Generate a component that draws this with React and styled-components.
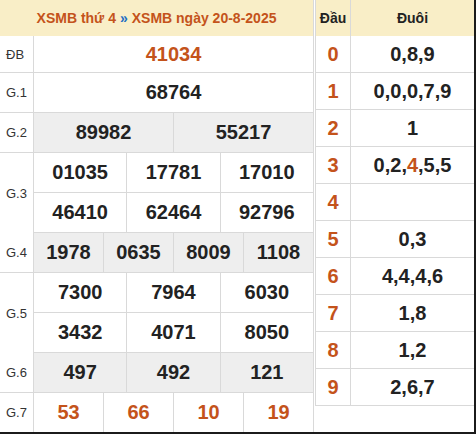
import React from 'react'
import styled, { createGlobalStyle } from 'styled-components'

const ORANGE = '#c4531b'
const CREAM = '#f9eec7'
const LINE = '#d9d9d9'
const GREY_ROW = '#eeeeee'
const INK = '#222'

const GlobalStyle = createGlobalStyle`
  html, body {
    margin: 0;
    padding: 0;
    background: #fff;
  }
  body {
    font-family: "Liberation Sans", Arial, sans-serif;
  }
`

const Frame = styled.div`
  display: flex;
  align-items: flex-start;
  width: 476px;
  height: 434px;
  box-sizing: border-box;
  border-right: 2px solid #1b1b1b;
  border-bottom: 2px solid #1b1b1b;
  overflow: hidden;
`

const ResultTable = styled.div`
  width: 314px;
  height: 100%;
  display: flex;
  flex-direction: column;
  flex-shrink: 0;
`

const TitleBar = styled.div`
  height: 36px;
  display: flex;
  align-items: center;
  justify-content: center;
  background: ${CREAM};
  border-right: 1px solid ${LINE};
  font-size: 14px;
  font-weight: bold;
  color: ${ORANGE};
  padding-bottom: 1px;
  box-sizing: border-box;
`

const Arrow = styled.span`
  color: #1f6fc4;
  margin: 0 4px;
`

const PrizeRow = styled.div`
  display: flex;
  height: ${p => p.$h || 40}px;
  box-sizing: border-box;
  border-bottom: 1px solid ${LINE};
  border-top: ${p => (p.$first ? `1px solid ${LINE}` : 'none')};
  background: ${p => (p.$shaded ? GREY_ROW : '#fff')};
  flex-shrink: 0;
`

const PrizeBlock = styled.div`
  display: flex;
  flex-shrink: 0;
`

const Label = styled.div`
  width: 34px;
  box-sizing: border-box;
  border-right: 1px solid ${LINE};
  display: flex;
  align-items: center;
  padding-left: 6px;
  font-size: 13px;
  color: #333;
  background: ${p => (p.$shaded ? GREY_ROW : '#fff')};
`

const Lines = styled.div`
  flex: 1;
  display: flex;
  flex-direction: column;
`

const NumberCell = styled.div`
  flex: 1;
  display: flex;
  align-items: center;
  justify-content: center;
  border-right: 1px solid ${LINE};
  font-size: 20px;
  font-weight: bold;
  color: ${p => (p.$hot ? ORANGE : INK)};
`

const LastRow = styled.div`
  flex: 1;
  display: flex;
  min-height: 0;
`

const HeadTable = styled.div`
  width: 160px;
  margin-left: 1px;
  border-left: 1px solid ${LINE};
  display: flex;
  flex-direction: column;
`

const HeadRow = styled.div`
  display: flex;
  height: ${p => (p.$title ? 36 : 37)}px;
  box-sizing: border-box;
  border-bottom: ${p => (p.$title ? 'none' : `1px solid ${LINE}`)};
  background: ${p => (p.$title ? CREAM : '#fff')};
`

const HeadCell = styled.div`
  width: 35px;
  box-sizing: border-box;
  border-right: 1px solid ${LINE};
  display: flex;
  align-items: center;
  justify-content: center;
  font-weight: bold;
  font-size: ${p => (p.$title ? 14 : 20)}px;
  color: ${p => (p.$title ? INK : ORANGE)};
`

const TailCell = styled.div`
  flex: 1;
  display: flex;
  align-items: center;
  justify-content: center;
  font-weight: bold;
  font-size: ${p => (p.$title ? 14 : 20)}px;
  color: ${INK};
`

const Hl = styled.span`
  color: ${ORANGE};
`

const prizes = [
  { label: 'ĐB', lines: [['41034']], hot: true, h: 37 },
  { label: 'G.1', lines: [['68764']] },
  { label: 'G.2', lines: [['89982', '55217']], shaded: true },
  { label: 'G.3', lines: [['01035', '17781', '17010'], ['46410', '62464', '92796']] },
  { label: 'G.4', lines: [['1978', '0635', '8009', '1108']], shaded: true },
  { label: 'G.5', lines: [['7300', '7964', '6030'], ['3432', '4071', '8050']] },
  { label: 'G.6', lines: [['497', '492', '121']], shaded: true },
]

const tails = [
  ['0', '0,8,9'],
  ['1', '0,0,0,7,9'],
  ['2', '1'],
  ['3', <>0,2,<Hl>4</Hl>,5,5</>],
  ['4', ''],
  ['5', '0,3'],
  ['6', '4,4,4,6'],
  ['7', '1,8'],
  ['8', '1,2'],
  ['9', '2,6,7'],
]

function Prize({ p }) {
  if (p.lines.length === 1) {
    return (
      <PrizeRow $shaded={p.shaded} $h={p.h}>
        <Label>{p.label}</Label>
        {p.lines[0].map((n, i) => (
          <NumberCell key={i} $hot={p.hot}>{n}</NumberCell>
        ))}
      </PrizeRow>
    )
  }
  return (
    <PrizeBlock>
      <Label>{p.label}</Label>
      <Lines>
        {p.lines.map((line, li) => (
          <PrizeRow key={li}>
            {line.map((n, i) => (
              <NumberCell key={i}>{n}</NumberCell>
            ))}
          </PrizeRow>
        ))}
      </Lines>
    </PrizeBlock>
  )
}

export default function App() {
  return (
    <>
      <GlobalStyle />
      <Frame>
        <ResultTable>
          <TitleBar>
            XSMB thứ 4<Arrow>»</Arrow>XSMB ngày 20-8-2025
          </TitleBar>
          {prizes.map(p => (
            <Prize key={p.label} p={p} />
          ))}
          <LastRow>
            <Label>G.7</Label>
            {['53', '66', '10', '19'].map(n => (
              <NumberCell key={n} $hot>{n}</NumberCell>
            ))}
          </LastRow>
        </ResultTable>
        <HeadTable>
          <HeadRow $title>
            <HeadCell $title>Đầu</HeadCell>
            <TailCell $title>Đuôi</TailCell>
          </HeadRow>
          {tails.map(([h, t]) => (
            <HeadRow key={h}>
              <HeadCell>{h}</HeadCell>
              <TailCell>{t}</TailCell>
            </HeadRow>
          ))}
        </HeadTable>
      </Frame>
    </>
  )
}
